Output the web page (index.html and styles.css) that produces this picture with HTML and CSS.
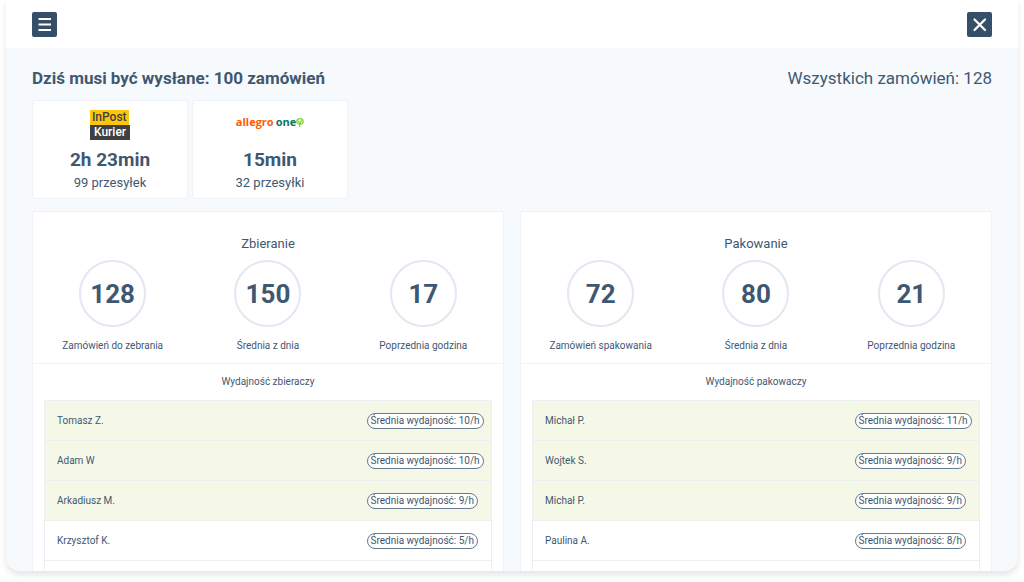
FILE: index.html
```
<!DOCTYPE html>
<html lang="pl">
<head>
<meta charset="utf-8">
<meta name="viewport" content="width=device-width, initial-scale=1">
<title>Zamówienia</title>
<link rel="stylesheet" href="styles.css">
</head>
<body>
<div class="shell">
  <header class="topbar">
    <button class="icon-button" type="button" aria-label="Menu">
      <svg viewBox="0 0 25 25" aria-hidden="true"><path d="M6.500 7h12.500M6.500 12.500h12.500M6.500 18h12.500" fill="none" stroke="currentColor" stroke-width="1.900"/></svg>
    </button>
    <button class="icon-button" type="button" aria-label="Zamknij">
      <svg viewBox="0 0 25 25" aria-hidden="true"><path d="M7.500 7.500l10.500 10.500M18 7.500L7.500 18" fill="none" stroke="currentColor" stroke-width="2.200" stroke-linecap="round"/></svg>
    </button>
  </header>
  <main class="content">
    <div class="summary">
      <h1 class="summary-title">Dziś musi być wysłane: 100 zamówień</h1>
      <p class="summary-total">Wszystkich zamówień: 128</p>
    </div>
    <section class="couriers">
      <article class="courier">
        <div class="courier-logo">
          <div class="inpost"><span class="inpost-top">InPost</span><span class="inpost-bottom">Kurier</span></div>
        </div>
        <strong class="courier-time">2h 23min</strong>
        <span class="courier-count">99 przesyłek</span>
      </article>
      <article class="courier">
        <div class="courier-logo">
          <div class="allegro">
            <span class="allegro-name">allegro</span>
            <span class="allegro-one">one</span>
            <svg class="allegro-leaf" viewBox="0 0 8 9" aria-hidden="true"><path d="M3.500 5.600C1.700 6.300.6 5 .8 3.300 1 1.500 2.400.7 4 .7c2 0 3.300 1.200 3.200 2.900C7.100 5.500 5.600 6.400 4.100 5.800M3.600 8.400C3.300 6 3.800 4.300 5.400 2.700M3.700 5L2.500 3.300" fill="none" stroke="currentColor" stroke-width="1.300" stroke-linecap="round"/></svg>
          </div>
        </div>
        <strong class="courier-time">15min</strong>
        <span class="courier-count">32 przesyłki</span>
      </article>
    </section>
    <div class="panels">
      <section class="panel">
        <div class="panel-stats">
          <h2 class="panel-title">Zbieranie</h2>
          <div class="stats">
            <div class="stat"><strong class="stat-value">128</strong><span>Zamówień do zebrania</span></div>
            <div class="stat"><strong class="stat-value">150</strong><span>Średnia z dnia</span></div>
            <div class="stat"><strong class="stat-value">17</strong><span>Poprzednia godzina</span></div>
          </div>
        </div>
        <div class="panel-list">
          <h3 class="list-title" id="pickers">Wydajność zbieraczy</h3>
          <table class="workers" aria-labelledby="pickers">
            <tbody>
              <tr class="top"><td>Tomasz Z.</td><td class="rate"><span class="badge">Średnia wydajność: 10/h</span></td></tr>
              <tr class="top"><td>Adam W</td><td class="rate"><span class="badge">Średnia wydajność: 10/h</span></td></tr>
              <tr class="top"><td>Arkadiusz M.</td><td class="rate"><span class="badge">Średnia wydajność: 9/h</span></td></tr>
              <tr><td>Krzysztof K.</td><td class="rate"><span class="badge">Średnia wydajność: 5/h</span></td></tr>
              <tr><td></td><td class="rate"></td></tr>
            </tbody>
          </table>
        </div>
      </section>
      <section class="panel">
        <div class="panel-stats">
          <h2 class="panel-title">Pakowanie</h2>
          <div class="stats">
            <div class="stat"><strong class="stat-value">72</strong><span>Zamówień spakowania</span></div>
            <div class="stat"><strong class="stat-value">80</strong><span>Średnia z dnia</span></div>
            <div class="stat"><strong class="stat-value">21</strong><span>Poprzednia godzina</span></div>
          </div>
        </div>
        <div class="panel-list">
          <h3 class="list-title" id="packers">Wydajność pakowaczy</h3>
          <table class="workers" aria-labelledby="packers">
            <tbody>
              <tr class="top"><td>Michał P.</td><td class="rate"><span class="badge">Średnia wydajność: 11/h</span></td></tr>
              <tr class="top"><td>Wojtek S.</td><td class="rate"><span class="badge">Średnia wydajność: 9/h</span></td></tr>
              <tr class="top"><td>Michał P.</td><td class="rate"><span class="badge">Średnia wydajność: 9/h</span></td></tr>
              <tr><td>Paulina A.</td><td class="rate"><span class="badge">Średnia wydajność: 8/h</span></td></tr>
              <tr><td></td><td class="rate"></td></tr>
            </tbody>
          </table>
        </div>
      </section>
    </div>
  </main>
</div>
</body>
</html>
```

FILE: styles.css
```
* { box-sizing: border-box; }

body {
  margin: 0;
  padding: 0 6px 11px;
  height: 100vh;
  background: #fff;
  color: #3f5872;
  font-family: Roboto, "Liberation Sans", sans-serif;
  font-size: 10px;
}

h1, h2, h3, p { margin: 0; font-weight: 400; }

.shell {
  display: flex;
  flex-direction: column;
  height: 100%;
  overflow: hidden;
  border-radius: 0 0 14px 14px;
  background: #f6fafd;
  box-shadow: 0 4px 6px rgba(0, 0, 0, 0.1);
}

.topbar {
  display: flex;
  flex: none;
  justify-content: space-between;
  align-items: center;
  height: 48px;
  padding: 0 26px;
  background: #fff;
}

.icon-button {
  width: 25px;
  height: 25px;
  padding: 0;
  border: 0;
  border-radius: 2px;
  background: #364f69;
  color: #fff;
}

.icon-button svg { display: block; width: 25px; height: 25px; }

.content {
  flex: 1;
  min-height: 0;
  padding: 20px 26px;
  overflow: auto;
  scrollbar-width: none;
}

.summary {
  display: flex;
  justify-content: space-between;
  margin-bottom: 12px;
  font-size: 17px;
  line-height: 20px;
}

.summary-title { font-size: 17px; font-weight: 700; }

.couriers { display: flex; gap: 4px; margin-bottom: 12px; }

.courier {
  display: flex;
  flex-direction: column;
  align-items: center;
  width: 156px;
  padding: 4px 0 5px;
  border: 1px solid #eff2f6;
  border-radius: 3px;
  background: #fff;
}

.courier-logo {
  display: flex;
  align-items: center;
  height: 40px;
  margin-bottom: 2px;
}

.courier-time { font-size: 19px; line-height: 26px; }

.courier-count { font-size: 13px; line-height: 20px; }

.inpost {
  display: flex;
  flex-direction: column;
  align-items: flex-start;
  font-size: 12px;
  font-weight: 500;
  line-height: 15px;
}

.inpost-top { padding: 0 2px; background: #fdc60a; color: #404041; }
.inpost-bottom { padding: 0 4px; background: #404041; color: #fff; }

.allegro {
  display: flex;
  align-items: center;
  margin-bottom: 6px;
  font-family: "Open Sans", sans-serif;
  font-size: 11px;
  font-weight: 700;
  line-height: 16px;
}

.allegro-name { margin-right: 2px; color: #ff5a00; }
.allegro-one { color: #087565; }
.allegro-leaf { width: 8px; height: 9px; color: #83d52d; }

.panels {
  display: grid;
  grid-template-columns: 1fr 1fr;
  gap: 16px;
}

.panel {
  border: 1px solid #eff2f6;
  border-radius: 3px;
  background: #fff;
}

.panel-stats {
  padding: 22px 2px 9px;
  border-bottom: 1px solid #eff2f6;
}

.panel-title {
  margin-bottom: 6px;
  font-size: 13px;
  line-height: 20px;
  text-align: center;
}

.stats { display: grid; grid-template-columns: repeat(3, 1fr); }

.stat {
  display: flex;
  flex-direction: column;
  align-items: center;
  gap: 11px;
  line-height: 16px;
}

.stat-value {
  display: flex;
  align-items: center;
  justify-content: center;
  width: 67px;
  height: 67px;
  border: 2px solid #e4e6f2;
  border-radius: 50%;
  font-size: 26px;
}

.panel-list { padding: 10px 11px 12px; }

.list-title {
  margin-bottom: 10px;
  font-size: 10px;
  line-height: 16px;
  text-align: center;
}

.workers {
  width: 100%;
  border: 1px solid #eceff4;
  border-collapse: collapse;
}

.workers td {
  height: 40px;
  padding: 0 12px;
  border-bottom: 1px solid #eceff1;
}

.workers .rate { width: 125px; padding: 0; }

.workers .top { background: #f5f8e6; }

.badge {
  display: inline-block;
  padding: 0 3px;
  border: 1px solid #667a90;
  border-radius: 8px;
  background: #fff;
  line-height: 14px;
  white-space: nowrap;
}
```
